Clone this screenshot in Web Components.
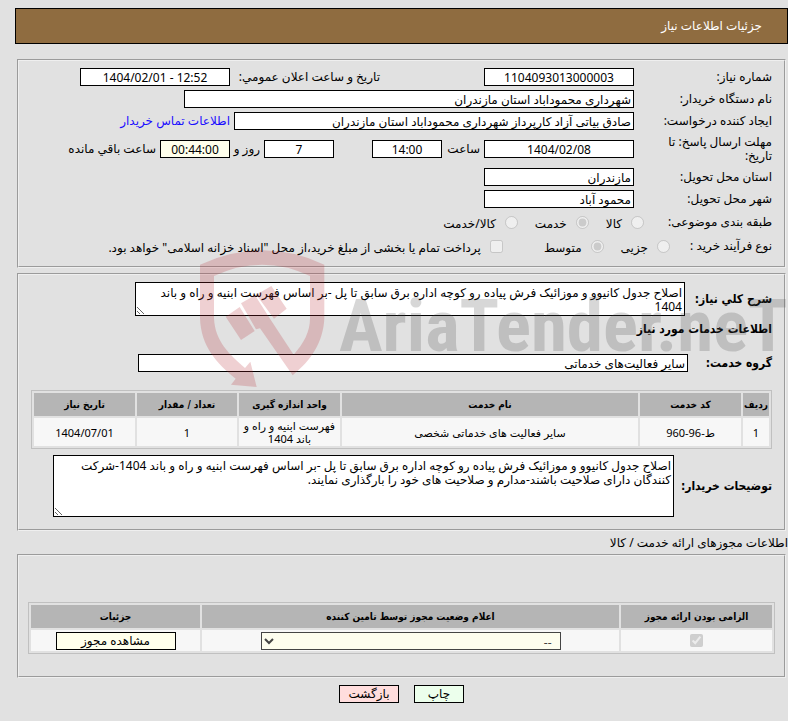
<!DOCTYPE html>
<html lang="fa" dir="rtl">
<head>
<meta charset="utf-8">
<title>جزئیات اطلاعات نیاز</title>
<style>
  :root {
    --font: "Noto Sans", "DejaVu Sans", sans-serif;
    --font-bold: "DejaVu Sans Condensed", "DejaVu Sans", sans-serif;
    --page: #e1e1e1;
    --head: #b5b5b5;
    --cell: #f7f7f7;
  }
  body {
    margin: 0;
    background: var(--page);
    color: #000;
    font: 12px/14px var(--font);
  }
</style>
</head>
<body>
<need-page></need-page>

<script>
function attach(host, html) {
  host.attachShadow({ mode: "open" });
  const template = document.createElement("template");
  template.innerHTML = html;
  host.shadowRoot.appendChild(template.content.cloneNode(true));
}

class PageTitle extends HTMLElement {
  constructor() {
    super();
    attach(this, `
      <style>
        :host { display: block; }
        h1 {
          margin: 0;
          padding: 10px 25px;
          border: 1px solid #000;
          background: #8f6c40;
          color: #fff;
          font-size: 12px;
          font-weight: normal;
          line-height: 14px;
        }
      </style>
      <h1><slot></slot></h1>
    `);
  }
}

class InfoPanel extends HTMLElement {
  constructor() {
    super();
    attach(this, `
      <style>
        :host { display: block; margin: 0 2px; }
        fieldset {
          min-width: 0;
          margin: 0;
          padding: var(--panel-padding, 5px 12px 8px);
          border: 2px groove #efefef;
        }
      </style>
      <fieldset><slot></slot></fieldset>
    `);
  }
}

class FormRow extends HTMLElement {
  constructor() {
    super();
    attach(this, `
      <style>
        :host {
          display: flex;
          align-items: center;
          gap: 4px;
          min-height: var(--row-height, 22px);
        }
      </style>
      <slot></slot>
    `);
  }
}

// label, plus a one line or multi line read-only box
class LabeledField extends HTMLElement {
  connectedCallback() {
    const label = this.getAttribute("label");
    const hint = this.getAttribute("hint");
    const value = this.getAttribute("value");
    const centered = this.hasAttribute("centered");
    const aria = hint ? `aria-label="${hint}"` : "";
    const box = this.hasAttribute("multiline")
      ? `<textarea id="box" readonly>${value}</textarea>`
      : `<input id="box" type="text" readonly value="${value}" ${aria} ${centered ? 'dir="ltr" class="centered"' : ""}>`;
    attach(this, `
      <style>
        :host { display: flex; align-items: center; gap: var(--label-gap, 0); }
        label {
          box-sizing: border-box;
          flex: none;
          width: var(--label-width, 138px);
          padding-left: var(--label-inset, 16px);
          font-family: var(--label-font, var(--font));
          font-weight: var(--label-weight, normal);
        }
        input, textarea {
          box-sizing: border-box;
          width: var(--box-width, 150px);
          height: var(--box-height, 18px);
          margin: 0;
          border: 1px solid #000;
          border-radius: 0;
          background: var(--box-color, #fff);
          color: #000;
          font: 12px/14px var(--font);
        }
        input { padding: 0 2px; }
        textarea { display: block; padding: 3px 2px; }
        .centered { text-align: center; }
      </style>
      ${label ? `<label for="box">${label}</label>` : ""}
      ${box}
    `);
  }
}

class OptionItem extends HTMLElement {
  connectedCallback() {
    const type = this.getAttribute("type") || "radio";
    const checked = this.hasAttribute("checked") ? "checked" : "";
    attach(this, `
      <style>
        :host { display: flex; align-items: center; gap: 9px; }
        input { flex: none; width: 13px; height: 13px; margin: 0; }
        label { padding-top: 4px; white-space: nowrap; }
      </style>
      <input id="opt" type="${type}" disabled ${checked}>
      <label for="opt"><slot></slot></label>
    `);
  }
}

const tableStyles = `
  :host { display: block; }
  table {
    width: 100%;
    border: 1px solid #c0c0c0;
    border-collapse: separate;
    border-spacing: 2px;
    table-layout: fixed;
    font-size: 11px;
    line-height: 13px;
  }
  th, td { padding: 1px; text-align: center; vertical-align: middle; }
  th {
    height: 21px;
    padding: 1px 0;
    background: var(--head);
    font-family: var(--font-bold);
    font-size: 10px;
    font-weight: bold;
    white-space: nowrap;
  }
  td { background: var(--cell); }
`;

class ServiceTable extends HTMLElement {
  constructor() {
    super();
    const columns = [
      ["ردیف", "26px"],
      ["کد خدمت", "101px"],
      ["نام خدمت", "auto"],
      ["واحد اندازه گیری", "101px"],
      ["تعداد / مقدار", "100px"],
      ["تاریخ نیاز", "101px"],
    ];
    const rows = [
      ["1", "ط-96-960", "سایر فعالیت های خدماتی شخصی", "فهرست ابنیه و راه و باند 1404", "1", "1404/07/01"],
    ];
    attach(this, `
      <style>${tableStyles} td { height: 26px; }</style>
      <table>
        <colgroup>${columns.map(([, width]) => `<col style="width:${width}">`).join("")}</colgroup>
        <thead><tr>${columns.map(([name]) => `<th>${name}</th>`).join("")}</tr></thead>
        <tbody>
          ${rows.map((row) => `<tr>${row.map((cell) => `<td>${cell}</td>`).join("")}</tr>`).join("")}
        </tbody>
      </table>
    `);
  }
}

class PermitTable extends HTMLElement {
  constructor() {
    super();
    attach(this, `
      <style>
        ${tableStyles}
        td { height: 19px; }
        input { display: block; width: 13px; height: 13px; margin: 0 auto; }
        select {
          display: block;
          box-sizing: border-box;
          width: 300px;
          height: 18px;
          margin: 0 auto;
          padding: 0 4px;
          border: 1px solid #444;
          border-radius: 0;
          background: #fdfdee;
          color: #444;
          font: 12px/14px var(--font);
        }
        action-button { --button-width: 120px; --button-color: #ffffec; }
      </style>
      <table>
        <colgroup><col style="width:151px"><col><col style="width:169px"></colgroup>
        <thead>
          <tr><th>الزامی بودن ارائه مجوز</th><th>اعلام وضعیت مجوز توسط تامین کننده</th><th>جزئیات</th></tr>
        </thead>
        <tbody>
          <tr>
            <td><input type="checkbox" checked disabled aria-label="الزامی بودن ارائه مجوز"></td>
            <td><select aria-label="اعلام وضعیت مجوز"><option>--</option></select></td>
            <td><action-button>مشاهده مجوز</action-button></td>
          </tr>
        </tbody>
      </table>
    `);
  }
}

class ActionButton extends HTMLElement {
  constructor() {
    super();
    attach(this, `
      <style>
        :host { display: inline-block; vertical-align: middle; }
        button {
          display: block;
          box-sizing: border-box;
          width: var(--button-width, 60px);
          height: 18px;
          padding: 0;
          border: 1px solid #000;
          border-radius: 0;
          background: var(--button-color, #fff);
          color: #000;
          font: 12px/14px var(--font);
        }
      </style>
      <button type="button"><slot></slot></button>
    `);
  }
}

class SiteWatermark extends HTMLElement {
  constructor() {
    super();
    attach(this, `
      <style>
        :host {
          position: absolute;
          top: 250px;
          left: 200px;
          display: flex;
          direction: ltr;
          gap: 14px;
          pointer-events: none;
        }
        svg { flex: none; width: 125px; height: 138px; fill: rgba(184, 39, 48, 0.22); }
        span {
          padding-top: 30px;
          color: rgba(75, 75, 75, 0.22);
          font: bold 73px/92px "Liberation Sans Narrow", "Roboto Condensed", "Open Sans Condensed", "DejaVu Sans Condensed", sans-serif;
          white-space: nowrap;
        }
      </style>
      <svg viewBox="600 0 375 414" aria-hidden="true">
        <path d="M600 44Q790-42 973 44V205C970 275 935 330 878 376L780 235L768 238L723 160L765 136L812 209L881 314C912 280 930 245 930 205V78Q787 10 642 78V205C645 275 690 315 735 354L751 335L770 411L693 404L707 386C650 340 603 290 600 205Z"/>
        <path d="M677 200L719 171L764 243L723 270ZM769 134L814 108L860 176L822 206Z"/>
      </svg>
      <span>AriaTender.neT</span>
    `);
  }
}

class NeedPage extends HTMLElement {
  constructor() {
    super();
    attach(this, `
      <style>
        :host { display: block; position: relative; overflow: hidden; padding: 8px 0 18px 15px; }
        page-title { margin-bottom: 15px; }
        .group { display: flex; align-items: center; width: 388px; }
        .group.wide { width: 434px; gap: 4px; }
        .inline { --label-inset: 0; --label-gap: 4px; white-space: nowrap; }
        .date { --label-width: 146px; }
        .hour { --label-width: 34px; --box-width: 70px; }
        .days { --box-width: 70px; }
        .left { --label-width: 26px; --box-width: 70px; --box-color: #ffffec; }
        a { color: #1a0dff; text-decoration: none; }
        .deadline { --row-height: 34px; }
        .options { --row-height: 24px; }
        .caption { flex: none; width: 124px; }
        .caption.narrow { width: 98px; }
        option-item { margin-left: 13px; }
        option-item[type="checkbox"] { margin: 0 24px 0 0; }
        .details { --panel-padding: 7px 12px 12px; margin-top: 5px; }
        .bold { --label-font: var(--font-bold); --label-weight: bold; --label-inset: 0; }
        .summary { --label-width: 87px; --box-width: 550px; --box-height: 34px; }
        .service { --label-width: 84px; --box-width: 550px; }
        .notes { --label-width: 98px; --box-width: 621px; --box-height: 62px; }
        h2 { margin: 6px 0 16px; font: bold 12px/14px var(--font-bold); }
        service-table { margin: 16px 0 6px; }
        p { margin: 5px 0 4px; }
        .permits { --panel-padding: 46px 9px 22px; }
        footer { display: flex; justify-content: center; gap: 15px; margin-top: 7px; }
        .print { --button-width: 50px; --button-color: #ecffec; }
        .back { --button-width: 60px; --button-color: #ffdddd; }
      </style>
      <page-title>جزئیات اطلاعات نیاز</page-title>

      <info-panel>
        <form-row>
          <div class="group"><labeled-field label="شماره نیاز:" value="1104093013000003" centered></labeled-field></div>
          <labeled-field class="inline date" label="تاریخ و ساعت اعلان عمومي:" value="1404/02/01 - 12:52" centered></labeled-field>
        </form-row>
        <form-row>
          <labeled-field style="--box-width:450px" label="نام دستگاه خریدار:" value="شهرداری محموداباد استان مازندران"></labeled-field>
        </form-row>
        <form-row>
          <labeled-field style="--box-width:400px" label="ایجاد کننده درخواست:" value="صادق بیاتی آزاد کارپرداز شهرداری محموداباد استان مازندران"></labeled-field>
          <a href="#contact">اطلاعات تماس خریدار</a>
        </form-row>
        <form-row class="deadline">
          <div class="group wide">
            <labeled-field label="مهلت ارسال پاسخ: تا تاریخ:" value="1404/02/08" centered></labeled-field>
            <labeled-field class="inline hour" label="ساعت" value="14:00" centered></labeled-field>
          </div>
          <labeled-field class="days" hint="روز" value="7" centered></labeled-field>
          <labeled-field class="inline left" label="روز و" value="00:44:00" centered></labeled-field>
          <span>ساعت باقي مانده</span>
        </form-row>
        <form-row>
          <labeled-field label="استان محل تحویل:" value="مازندران"></labeled-field>
        </form-row>
        <form-row>
          <labeled-field label="شهر محل تحویل:" value="محمود آباد"></labeled-field>
        </form-row>
        <form-row class="options">
          <span class="caption">طبقه بندی موضوعی:</span>
          <option-item>کالا</option-item>
          <option-item checked>خدمت</option-item>
          <option-item>کالا/خدمت</option-item>
        </form-row>
        <form-row class="options">
          <span class="caption narrow">نوع فرآیند خرید :</span>
          <option-item>جزیی</option-item>
          <option-item checked>متوسط</option-item>
          <option-item type="checkbox">پرداخت تمام یا بخشی از مبلغ خرید،از محل "اسناد خزانه اسلامی" خواهد بود.</option-item>
        </form-row>
      </info-panel>

      <info-panel class="details">
        <labeled-field class="bold summary" multiline label="شرح کلي نیاز:" value="اصلاح جدول کانیوو و موزائیک فرش پیاده رو کوچه اداره برق سابق تا پل -بر اساس فهرست ابنیه و راه و باند 1404"></labeled-field>
        <h2>اطلاعات خدمات مورد نیاز</h2>
        <form-row>
          <labeled-field class="bold service" label="گروه خدمت:" value="سایر فعالیت‌های خدماتی"></labeled-field>
        </form-row>
        <service-table></service-table>
        <labeled-field class="bold notes" multiline label="توضیحات خریدار:" value="اصلاح جدول کانیوو و موزائیک فرش پیاده رو کوچه اداره برق سابق تا پل -بر اساس فهرست ابنیه و راه و باند 1404-شرکت کنندگان دارای صلاحیت باشند-مدارم و صلاحیت های خود را بارگذاری نمایند."></labeled-field>
      </info-panel>

      <p>اطلاعات مجوزهای ارائه خدمت / کالا</p>
      <info-panel class="permits">
        <permit-table></permit-table>
      </info-panel>

      <footer>
        <action-button class="print">چاپ</action-button>
        <action-button class="back">بازگشت</action-button>
      </footer>
      <site-watermark></site-watermark>
    `);
  }
}

customElements.define("page-title", PageTitle);
customElements.define("info-panel", InfoPanel);
customElements.define("form-row", FormRow);
customElements.define("labeled-field", LabeledField);
customElements.define("option-item", OptionItem);
customElements.define("action-button", ActionButton);
customElements.define("service-table", ServiceTable);
customElements.define("permit-table", PermitTable);
customElements.define("site-watermark", SiteWatermark);
customElements.define("need-page", NeedPage);
</script>
</body>
</html>
